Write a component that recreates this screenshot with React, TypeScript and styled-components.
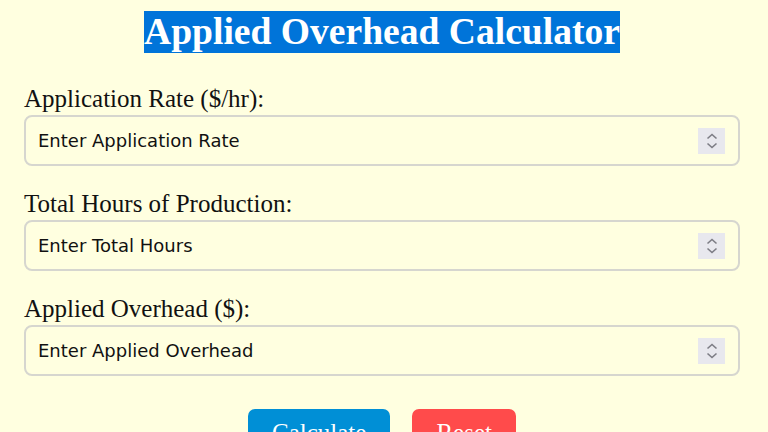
import React, { useState } from "react";
import styled, { createGlobalStyle } from "styled-components";

const GlobalStyle = createGlobalStyle`
  html, body {
    margin: 0;
    padding: 0;
    background: #ffffe0;
  }
  body {
    font-family: "Liberation Serif", "Times New Roman", serif;
  }
`;

type Field = {
  id: string;
  label: string;
  placeholder: string;
};

const fields: Field[] = [
  { id: "rate", label: "Application Rate ($/hr):", placeholder: "Enter Application Rate" },
  { id: "hours", label: "Total Hours of Production:", placeholder: "Enter Total Hours" },
  { id: "overhead", label: "Applied Overhead ($):", placeholder: "Enter Applied Overhead" },
];

const App = () => {
  const [values, setValues] = useState<Record<string, string>>({});

  return (
    <>
      <GlobalStyle />
      <Page>
        <TitleRow>
          <Title>Applied Overhead Calculator</Title>
        </TitleRow>
        {fields.map((f) => (
          <FieldGroup key={f.id}>
            <Label htmlFor={f.id}>{f.label}</Label>
            <InputBox>
              <Input
                id={f.id}
                type="text"
                inputMode="decimal"
                placeholder={f.placeholder}
                value={values[f.id] ?? ""}
                onChange={(e) => setValues({ ...values, [f.id]: e.target.value })}
              />
              <Spinner aria-hidden="true">
                <svg width="12" height="20" viewBox="0 0 12 20">
                  <path d="M1.5 7.5 L6 3.5 L10.5 7.5" fill="none" stroke="#7d7d85" strokeWidth="1.6" />
                  <path d="M1.5 12.5 L6 16.5 L10.5 12.5" fill="none" stroke="#7d7d85" strokeWidth="1.6" />
                </svg>
              </Spinner>
            </InputBox>
          </FieldGroup>
        ))}
        <ButtonRow>
          <Button variant="primary">Calculate</Button>
          <Button variant="danger">Reset</Button>
        </ButtonRow>
      </Page>
    </>
  );
};

export default App;

const Page = styled.div`
  width: 716px;
  padding: 11px 28px 0 24px;
  display: flex;
  flex-direction: column;
`;

const TitleRow = styled.div`
  display: flex;
  justify-content: center;
  margin-bottom: 32px;
`;

const Title = styled.h1`
  margin: 0;
  background: #0074d9;
  color: #ffffff;
  font-family: "Liberation Serif", "Times New Roman", serif;
  font-weight: bold;
  font-size: 37.6px;
  line-height: 42px;
`;

const FieldGroup = styled.div`
  display: flex;
  flex-direction: column;
  margin-bottom: 24px;
`;

const Label = styled.label`
  font-family: "Liberation Serif", "Times New Roman", serif;
  font-size: 25px;
  line-height: 28px;
  color: #111;
  margin-bottom: 2px;
`;

const InputBox = styled.div`
  display: flex;
  align-items: center;
  height: 51px;
  box-sizing: border-box;
  border: 2px solid #d6d6cf;
  border-radius: 8px;
  padding: 0 13px 0 12px;
`;

const Input = styled.input`
  flex: 1;
  min-width: 0;
  border: none;
  outline: none;
  background: transparent;
  padding: 0;
  font-family: "DejaVu Sans", Tahoma, sans-serif;
  font-size: 18px;
  color: #111;

  &::placeholder {
    color: #111;
    opacity: 1;
  }
`;

const Spinner = styled.span`
  width: 27px;
  height: 26px;
  display: flex;
  align-items: center;
  justify-content: center;
  background: #e8e8ee;
`;

const ButtonRow = styled.div`
  display: flex;
  justify-content: center;
  gap: 22px;
  margin-top: 9px;
`;

const Button = styled.button<{ variant: "primary" | "danger" }>`
  border: none;
  border-radius: 7px;
  padding: 10px 24px;
  font-family: "Liberation Serif", "Times New Roman", serif;
  font-size: 25px;
  color: #ffffff;
  background: ${(p) => (p.variant === "primary" ? "#008fd6" : "#ff4b4b")};
  cursor: pointer;
`;
